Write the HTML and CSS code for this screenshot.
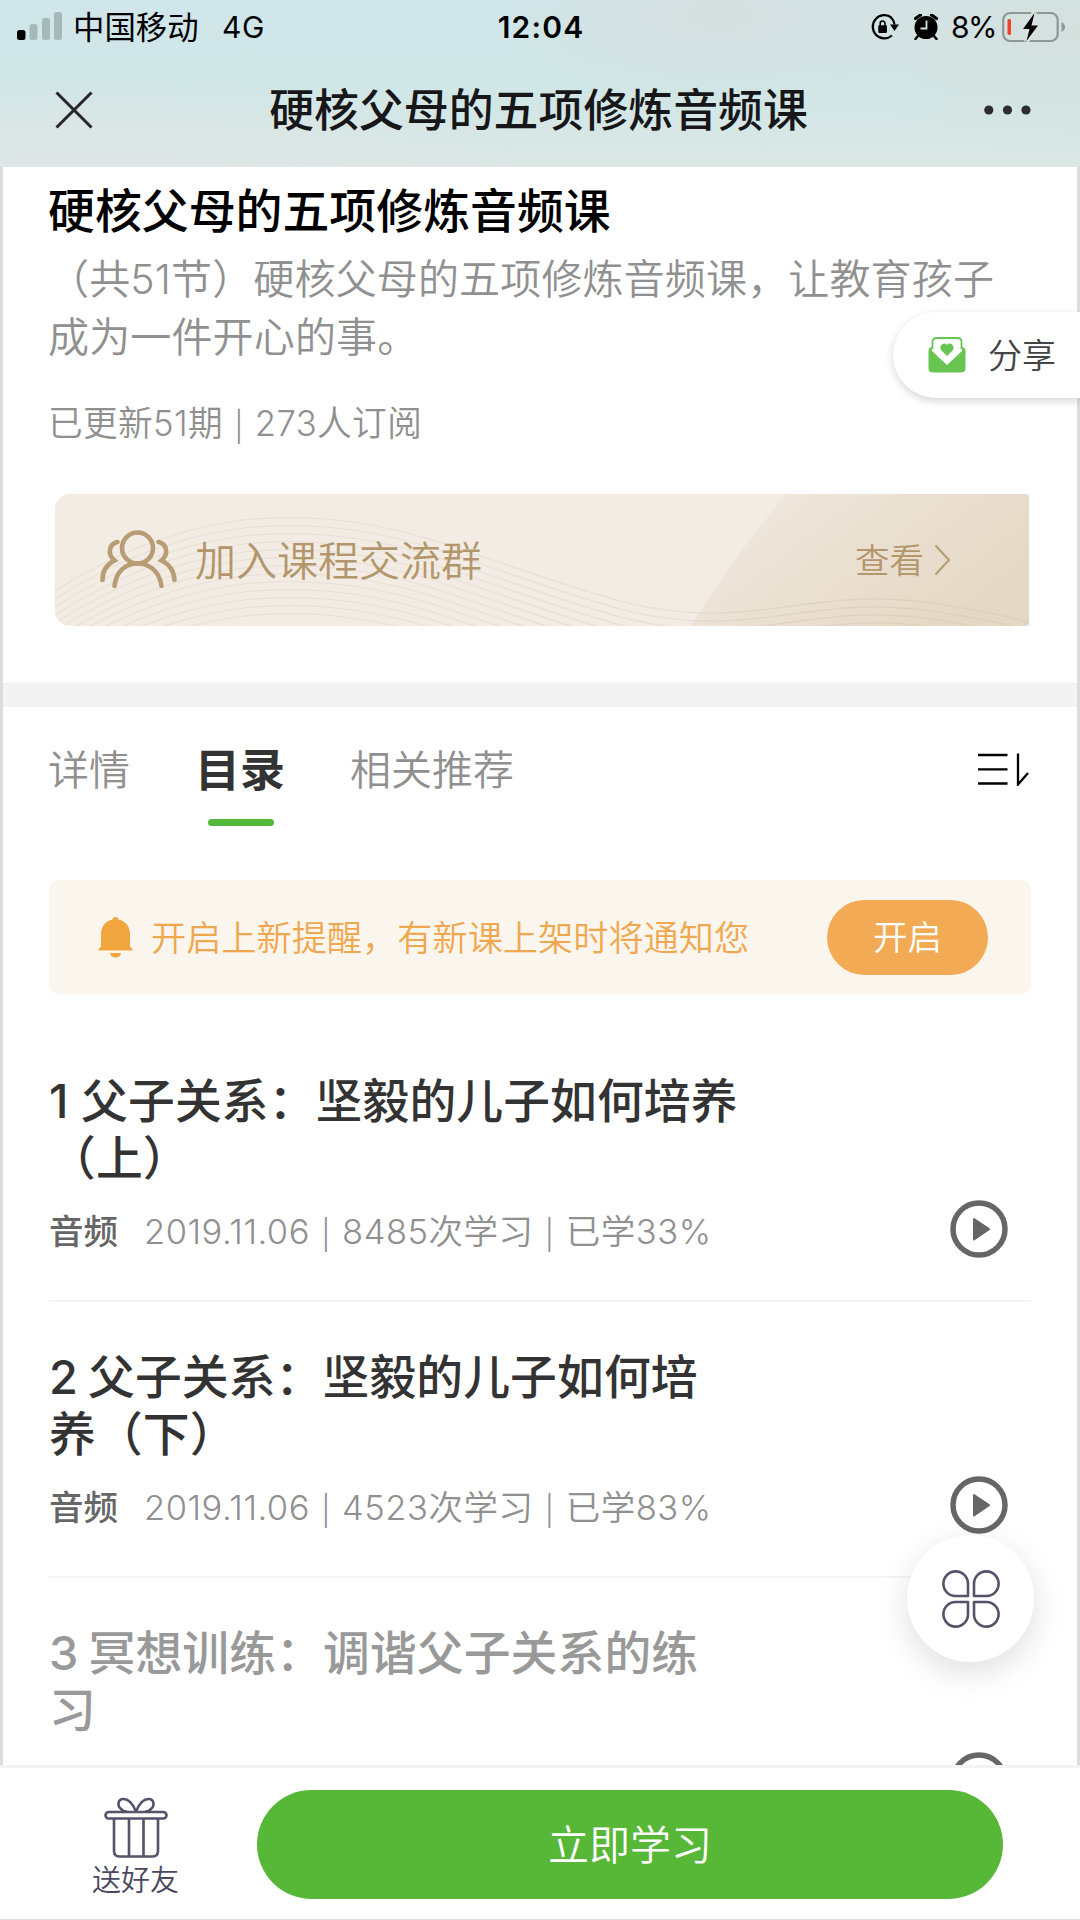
FILE: index.html
```html
<!DOCTYPE html>
<html lang="zh-CN">
<head>
<meta charset="utf-8">
<title>硬核父母的五项修炼音频课</title>
<link rel="stylesheet" href="styles.css">
</head>
<body>
<div class="screen">
  <header class="top">
    <div class="status">
      <div class="status-left">
        <svg class="signal" width="46" height="28" viewBox="0 0 46 28"><rect x="0" y="18" width="8.5" height="10" rx="2.5"/><g fill="#a5b8ba"><rect x="12.5" y="12" width="8" height="16" rx="2.5"/><rect x="25" y="6" width="8" height="22" rx="2.5"/><rect x="37" y="0" width="8" height="28" rx="2.5"/></g></svg>
        <span class="carrier">中国移动</span>
        <span class="network">4G</span>
      </div>
      <time class="clock">12:04</time>
      <div class="status-right">
        <svg class="lock" width="29" height="28" viewBox="0 0 29 28"><path d="M21.5 4.6A11.6 11.6 0 1 0 22 22.5M18 2.6a11.6 11.6 0 0 1 6.5 9" fill="none" stroke="#000" stroke-width="2.2"/><path d="M20 11.5h9l-4.5 6.5z"/><rect x="8.3" y="12.3" width="8.6" height="7.6" rx="1"/><path d="M10.2 13v-2.600a2.400 2.400 0 0 1 4.800 0V13" fill="none" stroke="#000" stroke-width="1.600"/></svg>
        <svg class="alarm" width="24" height="26" viewBox="0 0 24 26"><circle cx="12" cy="13.500" r="11.500"/><path d="M1.500 4.500l5-3.500M22.500 4.500l-5-3.500" stroke="#000" stroke-width="3.200" stroke-linecap="round"/><path d="M4 22l-2.500 3M20 22l2.500 3" stroke="#000" stroke-width="2.500" stroke-linecap="round"/><path d="M12.500 6.500v8H6.500" fill="none" stroke="#d5e2e0" stroke-width="1.800"/></svg>
        <span class="percent">8%</span>
        <svg class="battery" width="63" height="32" viewBox="0 0 63 32"><rect x="1.200" y="2" width="54.500" height="28" rx="7" fill="none" stroke="#8e9796" stroke-width="2.200"/><path d="M59.500 11v10q3.500-2 3.500-5t-3.500-5z" fill="#8e9796"/><rect x="5.500" y="8" width="3.500" height="16" rx="1.500" fill="#f0412e"/><path d="M32.500 1.500L21 18h6.500L24.500 30 36 14.500h-6.500z" stroke="#d7e2df" stroke-width="5"/><path d="M32.500 2L21 18h6.500L24.500 30 36 14.500h-6.500z"/></svg>
      </div>
    </div>
    <nav class="bar">
      <svg class="close" width="38" height="38" viewBox="0 0 38 38"><path d="M1.500 1.500l35 35M36.500 1.500l-35 35" stroke="#26262a" stroke-width="3"/></svg>
      <div class="bar-title">硬核父母的五项修炼音频课</div>
      <svg class="more" width="47" height="10" viewBox="0 0 47 10" fill="#2e2c31"><circle cx="4.800" cy="5" r="4.600"/><circle cx="23.500" cy="5" r="4.600"/><circle cx="42" cy="5" r="4.600"/></svg>
    </nav>
  </header>

  <main class="content">
    <section class="intro">
      <h1>硬核父母的五项修炼音频课</h1>
      <p class="desc">（共51节）硬核父母的五项修炼音频课，让教育孩子<br>成为一件开心的事。</p>
      <p class="counts">已更新51期 <i class="sep">|</i> 273人订阅</p>
      <div class="group">
        <svg class="group-bg" width="974" height="132" viewBox="0 0 974 132">
          <defs>
            <linearGradient id="sand" x1="0" y1="0" x2="1" y2="0.500"><stop offset="0" stop-color="#f2eae5"/><stop offset="0.500" stop-color="#ebe1d3"/><stop offset="1" stop-color="#e5d8c6"/></linearGradient>
            <path id="wave" d="M-40 117C110 3 250-4 390 42S580 112 660 111S790 86 890 103S960 120 1000 130"/>
          </defs>
          <path d="M731 0H974V132H636Q664 88 685 59T731 0z" fill="url(#sand)"/>
          <g fill="none" stroke="#8d8068" stroke-opacity="0.110" stroke-width="1.200">
            <use href="#wave" y="8"/><use href="#wave" y="16"/><use href="#wave" y="24"/><use href="#wave" y="32"/><use href="#wave" y="40"/><use href="#wave" y="48"/><use href="#wave" y="56"/><use href="#wave" y="64"/><use href="#wave" y="72"/><use href="#wave" y="80"/><use href="#wave" y="88"/><use href="#wave" y="96"/><use href="#wave" y="104"/>
          </g>
        </svg>
        <svg class="people" width="77" height="60" viewBox="0 0 77 60" fill="none" stroke="#b89c74" stroke-width="4.600" stroke-linecap="round"><circle cx="37.500" cy="18" r="15.500"/><path d="M14.500 56C16 41 26 33.500 37.500 33.500S59.500 41 61.500 56M17.500 12C9 14 7 24 14.500 30.500 6 34.500 2.500 42 2.500 50M58.500 12C67 14 69 24 61.500 30.500 70 34.500 74 42 74.500 50"/></svg>
        <span class="group-name">加入课程交流群</span>
        <span class="group-view">查看</span>
        <svg class="chevron" width="17" height="32" viewBox="0 0 17 32"><path d="M1.500 1.500L15 16 1.500 30.500" fill="none" stroke="#b89a6c" stroke-width="2"/></svg>
      </div>
    </section>

    <section class="catalog">
      <div class="tabs">
        <span class="tab">详情</span>
        <span class="tab tab-active">目录</span>
        <span class="tab">相关推荐</span>
        <svg class="sort" width="51" height="34" viewBox="0 0 51 34" fill="none" stroke="#000" stroke-width="2.300"><path d="M0 3h29.500M0 17.300h29.500M0 31.500h29.500M40 1.500v31L50 21"/></svg>
      </div>

      <div class="notice">
        <svg class="bell" width="35" height="41" viewBox="0 0 35 41" fill="#f0a53e"><path d="M17.500 0c1.800 0 2.700 1.200 3 2.500C28 4 32 10 32 17.500V29.500l2.500 2.500v1.500H.500V32L3 29.500V17.500C3 10 7 4 14.500 2.500 14.800 1.200 15.700 0 17.500 0zM12 36h11c-.500 3-2.500 4.500-5.500 4.500S12.500 39 12 36z"/></svg>
        <span class="notice-text">开启上新提醒，有新课上架时将通知您</span>
        <button class="notice-btn">开启</button>
      </div>

      <ul class="lessons">
        <li class="lesson">
          <div class="lesson-title">1 父子关系：坚毅的儿子如何培养<br>（上）</div>
          <div class="lesson-meta"><b>音频</b><span>2019.11.06 <i class="sep">|</i> 8485次学习 <i class="sep">|</i> 已学33%</span>
            <svg class="play" width="58" height="58" viewBox="0 0 58 58"><circle cx="29" cy="29" r="26" fill="none" stroke="#666" stroke-width="5.500"/><path d="M24 19v20.500l15-10.300z" fill="#666" stroke="#666" stroke-width="2" stroke-linejoin="round"/></svg>
          </div>
        </li>
        <li class="lesson">
          <div class="lesson-title lesson-title-tight">2 父子关系：坚毅的儿子如何培<br>养（下）</div>
          <div class="lesson-meta"><b>音频</b><span>2019.11.06 <i class="sep">|</i> 4523次学习 <i class="sep">|</i> 已学83%</span>
            <svg class="play" width="58" height="58" viewBox="0 0 58 58"><circle cx="29" cy="29" r="26" fill="none" stroke="#666" stroke-width="5.500"/><path d="M24 19v20.500l15-10.300z" fill="#666" stroke="#666" stroke-width="2" stroke-linejoin="round"/></svg>
          </div>
        </li>
        <li class="lesson lesson-done">
          <div class="lesson-title lesson-title-tight">3 冥想训练：调谐父子关系的练<br>习</div>
          <div class="lesson-meta">
            <svg class="play" width="58" height="58" viewBox="0 0 58 58"><circle cx="29" cy="29" r="26" fill="none" stroke="#666" stroke-width="5.500"/></svg>
          </div>
        </li>
      </ul>
    </section>
  </main>

  <footer class="actions">
    <div class="gift">
      <svg width="64" height="62" viewBox="0 0 64 62" fill="none" stroke="#55526a" stroke-width="2.600"><rect x="1.500" y="15" width="61" height="6.500" rx="3.250"/><path d="M10 21.500V54q0 5.500 5.500 5.500h33q5.500 0 5.500-5.500V21.500M25 21.500v38M39.500 21.500v38M32 14.500C29 7 24 1.500 18.500 2c-4.500.500-5 6-2.500 9 2 2.500 4 3.500 7 3.500M32 14.500C35 7 40 1.500 45.500 2c4.500.500 5 6 2.500 9-2 2.500-4 3.500-7 3.500"/></svg>
      <span>送好友</span>
    </div>
    <button class="study">立即学习</button>
  </footer>

  <div class="share">
    <svg width="38" height="36" viewBox="0 0 38 36"><path d="M4.500 12V5q0-4 4-4h21q4 0 4 4v7" fill="none" stroke="#68c552" stroke-width="1.800"/><path d="M4 10q-3.500.500-3.500 4v17q0 4.500 4.500 4.500h28q4.500 0 4.500-4.500V14q0-3.500-3.500-4v4L19 28 4 14z" fill="#68c552"/><path d="M19 19l-5.500-5.500c-3.500-4 2-9.500 5.500-5.500 3.500-4 9 1.500 5.500 5.500z" fill="#68c552"/></svg>
    <span>分享</span>
  </div>
  <div class="float">
    <svg width="58" height="58" viewBox="0 0 58 58" fill="none" stroke="#55526a" stroke-width="2.600" stroke-linejoin="round"><path id="petal" d="M26 26H13.500A12.300 12.300 0 1 1 26 13.500z"/><use href="#petal" transform="matrix(-1 0 0 1 58 0)"/><use href="#petal" transform="matrix(1 0 0 -1 0 58)"/><use href="#petal" transform="matrix(-1 0 0 -1 58 58)"/></svg>
  </div>
</div>
</body>
</html>
```
FILE: styles.css
```css
* { box-sizing: border-box; margin: 0; padding: 0; }
body { background: #fff; font-family: Inter, "Noto Sans CJK SC", sans-serif; color: #333; }
button { border: 0; font-family: inherit; color: #fff; }
svg { display: block; flex: none; }

.screen { position: relative; width: 1080px; height: 1920px; overflow: hidden; display: flex; flex-direction: column; white-space: nowrap; }

.top {
  height: 167px; flex: none; color: #000;
  background:
    radial-gradient(ellipse 230px 90px at 720px 15px, rgba(214, 221, 221, 0.9), transparent),
    radial-gradient(ellipse 320px 120px at 1080px 30px, rgba(213, 223, 219, 0.9), transparent),
    radial-gradient(ellipse 420px 90px at 100px 167px, rgba(222, 230, 228, 0.9), transparent),
    linear-gradient(#d0e6ea, #d1e6e6 55%, #dbe7e5);
}
.status { display: flex; justify-content: space-between; height: 54px; padding: 0 15px 0 17px; font-size: 30px; }
.status-left, .status-right { width: 440px; display: flex; align-items: center; }
.status-right { justify-content: flex-end; }
.signal { margin-right: 10px; margin-top: -2px; }
.carrier { width: 127px; padding-bottom: 4px; font-size: 31.4px; }
.network { margin-left: 22px; letter-spacing: 0.5px; }
.clock { line-height: 54px; font-weight: 600; letter-spacing: 1.2px; }
.alarm { margin-left: 15px; }
.percent { width: 44px; margin: 0 7px 0 13px; letter-spacing: -1.5px; }
.bar { display: flex; justify-content: space-between; align-items: center; height: 111px; padding: 0 49px 0 55px; }
.bar-title { padding-bottom: 4px; font-size: 44.9px; font-weight: 500; color: #17171a; }

.content { flex: none; height: 1598px; overflow: hidden; border: solid #dcdcdc; border-width: 0 3px; }
.intro { height: 540px; padding: 12px 48px 0 45px; border-bottom: 24px solid #f3f3f3; display: flex; flex-direction: column; }
h1 { font-size: 46.9px; line-height: 64px; font-weight: 500; color: #000; }
.desc { margin-top: 8px; font-size: 41px; line-height: 57.5px; letter-spacing: 0.15px; font-weight: 350; color: #909090; }
.counts { margin-top: 32px; font-size: 34.7px; line-height: 50px; letter-spacing: 0.35px; font-weight: 350; color: #909090; }
.sep { position: relative; top: 1px; margin: 0 1px; font-style: normal; font-size: 0.85em; line-height: 0; }
.group { position: relative; display: flex; align-items: center; width: 974px; height: 132px; margin: 46px 0 0 7px; padding: 0 78px 0 45px; border-radius: 15px 3px 3px 15px; background: #f3ece5; color: #b3966a; font-weight: 350; overflow: hidden; }
.group-bg { position: absolute; left: 0; top: 0; }
.people, .group-name, .group-view, .chevron { position: relative; }
.group-name { margin-left: 18px; padding-bottom: 4px; font-size: 41px; flex: 1; }
.group-view { padding-bottom: 4px; font-size: 34.5px; margin-right: 10px; }

.catalog { padding: 0 46px; }
.tabs { display: flex; align-items: center; height: 124px; font-size: 41px; font-weight: 350; color: #909090; }
.tab { margin-left: -1px; padding-bottom: 4px; }
.tab-active { position: relative; margin: 0 66px 0 65px; font-size: 45px; font-weight: 700; color: #333; }
.tab-active::after { content: ""; position: absolute; left: 13px; bottom: -22px; width: 66px; height: 7px; border-radius: 4px; background: #53b83a; }
.sort { margin-left: auto; margin-right: 2px; }

.notice { display: flex; align-items: center; height: 114px; margin-top: 49px; padding: 0 43px 0 49px; border-radius: 9px; background: #faf5ed; }
.notice-text { margin-left: 18px; padding-bottom: 4px; flex: 1; font-size: 35.2px; font-weight: 350; color: #f0a850; }
.notice-btn { width: 161px; height: 75px; padding-bottom: 5px; border-radius: 38px; background: #f2aa54; font-size: 34.5px; font-weight: 350; }

.lessons { list-style: none; padding-top: 32px; }
.lesson { height: 276px; padding-top: 47px; border-bottom: 2px solid #f4f4f4; }
.lesson-title { font-size: 46.8px; line-height: 57px; font-weight: 500; letter-spacing: 0.1px; }
.lesson-title-tight { word-spacing: -2.5px; }
.lesson-meta { display: flex; align-items: center; height: 58px; margin-top: 13px; padding-right: 23px; font-size: 34.5px; color: #909090; font-weight: 350; letter-spacing: 0.52px; }
.lesson-meta b { width: 95px; font-weight: 500; color: #666; letter-spacing: 0; }
.lesson-done .lesson-title { color: #999; }
.play { margin-left: auto; }

.actions { flex: 1; display: flex; align-items: flex-start; padding: 22px 77px 0 92px; border-top: 3px solid #f3f3f3; border-bottom: 1px solid #ddd; background: #fff; }
.gift { width: 87px; padding-top: 7px; display: flex; flex-direction: column; align-items: center; font-size: 29px; line-height: 43px; color: #4a4860; font-weight: 350; }
.study { width: 746px; height: 109px; margin-left: auto; padding-bottom: 5px; border-radius: 55px; background: #57b737; font-size: 41px; font-weight: 350; }

.share { position: absolute; right: 0; top: 312px; width: 187px; height: 86px; padding-left: 35px; display: flex; align-items: center; gap: 22px; border-radius: 43px 0 0 43px; background: #fff; box-shadow: 0 3px 8px rgba(0, 0, 0, 0.17); font-size: 34px; font-weight: 350; color: #444; }
.share span { padding-bottom: 4px; }
.float { position: absolute; left: 907px; top: 1535px; width: 127px; height: 127px; border-radius: 50%; background: #fff; box-shadow: 0 10px 32px rgba(0, 0, 0, 0.13); display: flex; align-items: center; justify-content: center; }
```
